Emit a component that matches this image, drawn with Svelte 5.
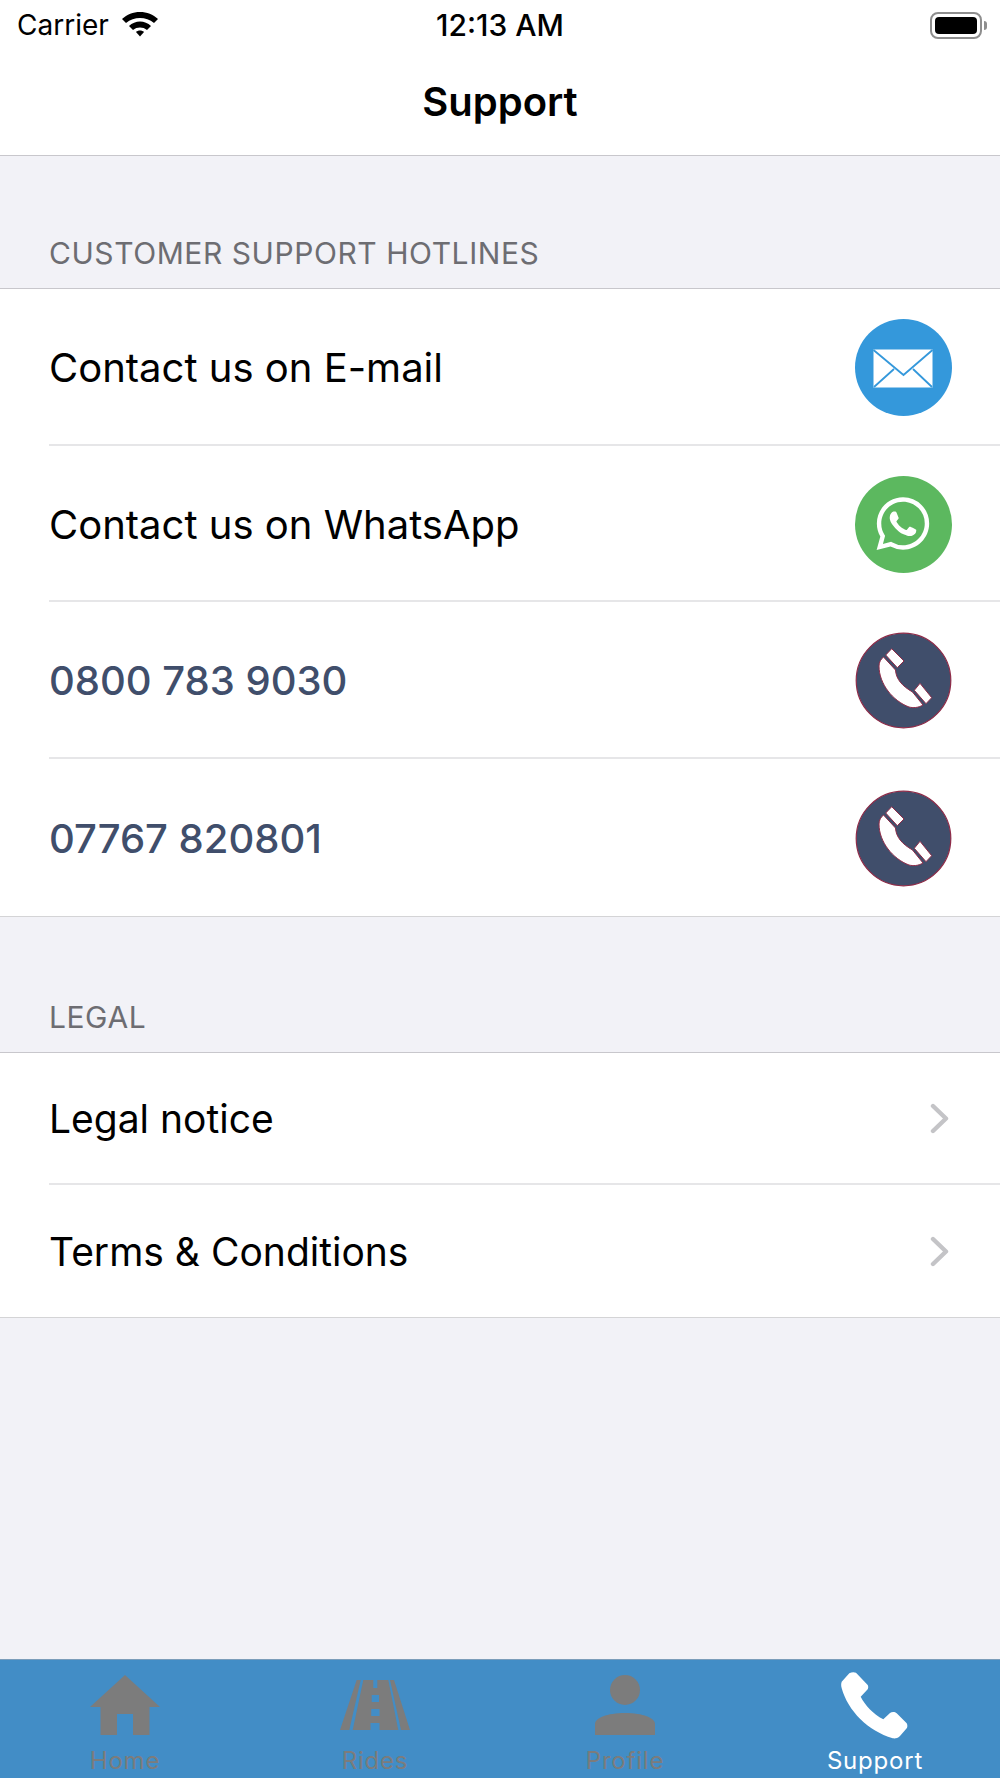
<script>

    // data
    const hotlines = [
        { label: 'Contact us on E-mail', icon: 'mail' },
        { label: 'Contact us on WhatsApp', icon: 'whatsapp' },
        { label: '0800 783 9030', icon: 'phone', link: true },
        { label: '07767 820801', icon: 'phone', link: true }
    ];

    const legal = ['Legal notice', 'Terms & Conditions'];

    const tabs = [
        { label: 'Home', icon: 'home' },
        { label: 'Rides', icon: 'rides' },
        { label: 'Profile', icon: 'profile' },
        { label: 'Support', icon: 'support', active: true }
    ];

</script>


<div class="page">

    <header class="top">
        <div class="status">
            <div class="status-left">
                <span class="carrier">Carrier</span>
                <svg class="wifi" width="38" height="26" viewBox="0 0 38 26">
                    <path d="M19 1C12 1 6 3.500 1 8L5 12C9 8.500 14 7 19 7C24 7 29 8.500 33 12L37 8C32 3.500 26 1 19 1Z" />
                    <path d="M19 10.500C15 10.500 11 12 8 15L12 19C14 17.300 16.500 16.500 19 16.500C21.500 16.500 24 17.300 26 19L30 15C27 12 23 10.500 19 10.500Z" />
                    <path d="M19 19.500C17.500 19.500 16 20 15 21L19 25.500L23 21C22 20 20.500 19.500 19 19.500Z" />
                </svg>
            </div>
            <span class="clock">12:13 AM</span>
            <div class="battery">
                <div class="battery-shell"><div class="battery-fill"></div></div>
                <div class="battery-nub"></div>
            </div>
        </div>
        <h1 class="title">Support</h1>
    </header>

    <main class="content">

        <h2 class="section-title first">CUSTOMER SUPPORT HOTLINES</h2>
        <ul class="list">
            {#each hotlines as row}
                <li class="row tall">
                    <div class="row-inner">
                        <span class="row-label" class:link={row.link}>{row.label}</span>
                        <svg class="badge" width="97" height="97" viewBox="0 0 97 97">
                            {#if row.icon === 'mail'}
                                <circle cx="48.500" cy="48.500" r="48.500" fill="#3498db" />
                                <rect x="18.500" y="30.500" width="59" height="38" fill="#fff" />
                                <path d="M18.500 31L48.500 56L77.500 31M39 50L19 68M58 50L77 68" fill="none" stroke="#3498db" stroke-width="1.800" />
                            {:else if row.icon === 'whatsapp'}
                                <circle cx="48.500" cy="48.500" r="48.500" fill="#5cb85f" />
                                <g transform="translate(21.500 21.300) scale(2.200)">
                                    <path fill="#fff" d="M17.472 14.382c-.297-.149-1.758-.867-2.03-.967-.273-.099-.471-.148-.67.15-.197.297-.767.966-.94 1.164-.173.199-.347.223-.644.075-.297-.15-1.255-.463-2.39-1.475-.883-.788-1.48-1.761-1.653-2.059-.173-.297-.018-.458.13-.606.134-.133.298-.347.446-.52.149-.174.198-.298.298-.497.099-.198.05-.371-.025-.52-.075-.149-.669-1.612-.916-2.207-.242-.579-.487-.5-.669-.51-.173-.008-.371-.01-.57-.01-.198 0-.52.074-.792.372-.272.297-1.04 1.016-1.04 2.479 0 1.462 1.065 2.875 1.213 3.074.149.198 2.096 3.2 5.077 4.487.709.306 1.262.489 1.694.625.712.227 1.36.195 1.871.118.571-.085 1.758-.719 2.006-1.413.248-.694.248-1.289.173-1.413-.074-.124-.272-.198-.57-.347m-5.421 7.403h-.004a9.87 9.87 0 01-5.031-1.378l-.361-.214-3.741.982.998-3.648-.235-.374a9.86 9.86 0 01-1.51-5.26c.001-5.45 4.436-9.884 9.888-9.884 2.64 0 5.122 1.03 6.988 2.898a9.825 9.825 0 012.893 6.994c-.003 5.45-4.437 9.884-9.885 9.884m8.413-18.297A11.815 11.815 0 0012.05 0C5.495 0 .16 5.335.157 11.892c0 2.096.547 4.142 1.588 5.945L.057 24l6.305-1.654a11.882 11.882 0 005.683 1.448h.005c6.554 0 11.89-5.335 11.893-11.893a11.821 11.821 0 00-3.48-8.413z" />
                                </g>
                            {:else}
                                <circle cx="48.500" cy="48.500" r="47.300" fill="#404e6b" stroke="#8f2b48" stroke-width="1.200" />
                                <g fill="#fff" stroke="#8f2b48" stroke-width="1" stroke-linejoin="round">
                                    <path d="M36.700 16.700L49 29L42.300 35.700L30.700 23Z" />
                                    <path d="M65 51.300L76.700 65.700L71 71.700L59.300 58.300Z" />
                                    <path d="M28.500 25L40.500 38C41 47 47 54 57.500 60L68 73C63 76 58 76 54 75C38 69 24 52 24 34C24 30 26 27 28.500 25Z" />
                                </g>
                            {/if}
                        </svg>
                    </div>
                </li>
            {/each}
        </ul>

        <h2 class="section-title">LEGAL</h2>
        <ul class="list">
            {#each legal as label}
                <li class="row short">
                    <div class="row-inner">
                        <span class="row-label">{label}</span>
                        <svg class="chevron" width="19" height="31" viewBox="0 0 19 31">
                            <path d="M3 3L16 15.500L3 28" fill="none" stroke="#c4c4c7" stroke-width="4.400" stroke-linecap="round" stroke-linejoin="round" />
                        </svg>
                    </div>
                </li>
            {/each}
        </ul>

    </main>

    <nav class="tabbar">
        {#each tabs as tab}
            <div class="tab" class:active={tab.active}>
                <svg class="tab-icon" width="80" height="68" viewBox="0 0 80 68">
                    {#if tab.icon === 'home'}
                        <path d="M40 4L75 36H64.500V64H48V43H32V64H15.500V36H5Z" />
                    {:else if tab.icon === 'rides'}
                        <path d="M21.700 9H25.700L14.300 59H5Z" />
                        <path d="M28.300 9H53.300L63.300 59H44.500V52H35.500V59H17.700Z" />
                        <path d="M55 9H59L75 59H66Z" />
                        <g class="dash">
                            <rect x="38.300" y="9" width="4" height="8" />
                            <rect x="36.700" y="24" width="7.300" height="7" />
                            <rect x="36.200" y="38" width="8.300" height="7" />
                        </g>
                    {:else if tab.icon === 'profile'}
                        <circle cx="40" cy="19" r="15" />
                        <path d="M10 64V53C10 47 22 42 40 42C58 42 70 47 70 53V64Z" />
                    {:else}
                        <path d="M14.300 2.300C16.500 1 19 .8 21 1.700L32.700 14C33.400 15.500 33.400 17 32.700 18.300L25.700 25.700C30 34 38 43 48.300 48.300L55 42C57 40.500 60 40.700 61.700 42.300L71.700 52.300C72.600 54 72.600 56 71.700 57.300L65 65C62.500 67.300 60 67.700 57.700 67.300C33 60 13 40 6.700 17.300C6 15 6 12.500 6.700 10.700Z" />
                    {/if}
                </svg>
                <span class="tab-label">{tab.label}</span>
            </div>
        {/each}
    </nav>

</div>


<style>

    :global(body) {
        margin: 0;
        background: #f2f2f7;
    }

    .page {
        display: flex;
        flex-direction: column;
        width: 1000px;
        height: 1778px;
        overflow: hidden;
        font-family: Inter, "Liberation Sans", sans-serif;
        color: #000;
    }

    .top {
        height: 156px;
        box-sizing: border-box;
        background: #fff;
        border-bottom: 1px solid #c8c7cc;
        flex-shrink: 0;
    }

    .status {
        display: grid;
        grid-template-columns: 1fr auto 1fr;
        align-items: center;
        height: 50px;
        padding: 0 13px;
    }

    .status-left {
        display: flex;
        align-items: center;
        gap: 12px;
        padding-left: 4px;
    }

    .carrier {
        font-size: 28px;
        line-height: 50px;
    }

    .wifi {
        fill: #000;
        margin-top: -2px;
    }

    .clock {
        font-size: 30px;
        font-weight: 500;
    }

    .battery {
        display: flex;
        align-items: center;
        justify-content: flex-end;
        gap: 2px;
    }

    .battery-shell {
        width: 52px;
        height: 27px;
        box-sizing: border-box;
        padding: 3px;
        border: 2.500px solid #8e8e8e;
        border-radius: 8px;
    }

    .battery-fill {
        height: 100%;
        background: #000;
        border-radius: 4px;
    }

    .battery-nub {
        width: 3px;
        height: 9px;
        background: #8e8e8e;
        border-radius: 0 3px 3px 0;
    }

    .title {
        margin: 0;
        text-align: center;
        font-size: 40px;
        font-weight: 600;
        line-height: 104px;
    }

    .content {
        flex: 1;
        background: #f2f2f7;
    }

    .section-title {
        display: flex;
        align-items: flex-end;
        box-sizing: border-box;
        height: 135px;
        margin: 0;
        padding: 0 49px 18px;
        font-size: 30px;
        font-weight: 400;
        line-height: 34px;
        letter-spacing: 0.560px;
        color: #6d6d72;
    }

    .section-title.first {
        height: 132px;
    }

    .list {
        margin: 0;
        padding: 0;
        list-style: none;
        background: #fff;
        border-top: 1px solid #c8c7cc;
        border-bottom: 1px solid #d4d4d6;
    }

    .row {
        padding-left: 49px;
        box-sizing: border-box;
    }

    .row-inner {
        display: flex;
        align-items: center;
        justify-content: space-between;
        box-sizing: border-box;
        height: 100%;
        padding-top: 2px;
        border-bottom: 2px solid #e6e6e8;
    }

    .row:last-child .row-inner {
        border-bottom: none;
    }

    .row.tall {
        height: 156.700px;
    }

    .row.tall .row-inner {
        padding-right: 48px;
    }

    .row.short {
        height: 132px;
    }

    .row.short .row-inner {
        padding-right: 51px;
    }

    .row-label {
        font-size: 39px;
    }

    .row.tall .row-label {
        font-size: 40px;
    }

    .row-label.link {
        color: #404e6b;
        font-weight: 500;
    }

    .badge {
        display: block;
    }

    .chevron {
        display: block;
    }

    .tabbar {
        display: grid;
        grid-template-columns: repeat(4, 1fr);
        height: 119px;
        box-sizing: border-box;
        flex-shrink: 0;
        background: #428dc6;
        border-top: 1px solid #7c9dba;
        overflow: hidden;
    }

    .tab {
        display: flex;
        flex-direction: column;
        align-items: center;
        padding-top: 11px;
        fill: #7c7c7c;
        color: #7c7c7c;
    }

    .tab.active {
        fill: #fff;
        color: #fff;
    }

    .tab-icon {
        display: block;
        flex-shrink: 0;
    }

    .dash {
        fill: #428dc6;
    }

    .tab-label {
        margin-top: 7px;
        font-size: 24px;
        line-height: 29px;
        letter-spacing: 0.8px;
    }

</style>
